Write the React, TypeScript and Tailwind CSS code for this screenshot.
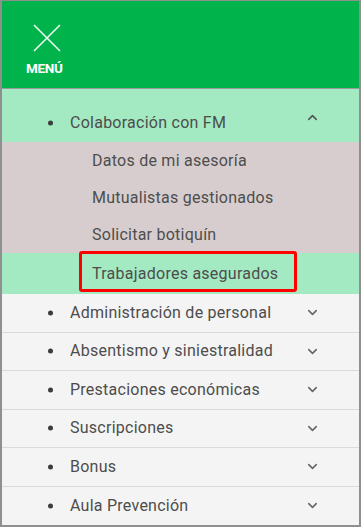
import { ChevronDown, ChevronUp } from "lucide-react";

const subItems = ["Datos de mi asesoría", "Mutualistas gestionados", "Solicitar botiquín"];

const sections = [
  "Administración de personal",
  "Absentismo y siniestralidad",
  "Prestaciones económicas",
  "Suscripciones",
  "Bonus",
  "Aula Prevención",
];

function Bullet() {
  return <span className="absolute left-[46px] top-1/2 -translate-y-1/2 w-[5px] h-[5px] rounded-full bg-[#3c3c3c]" />;
}

export default function App() {
  return (
    <div className="w-[363px] h-[529px] bg-white font-['Roboto',sans-serif] text-[16px] tracking-[0.25px] text-[#4d4d4d]">
      <div className="w-[361px] border-t border-x-2 border-b-2 border-[#8f8f8f]">
        {/* Header */}
        <div className="h-[88px] bg-[#00b44b] border-b border-[#9a9a9a] flex flex-col items-start pl-[24px] pt-[22px]">
          <svg width="30" height="30" viewBox="0 0 30 30" className="ml-[6px]">
            <path d="M2 2 L28 28 M28 2 L2 28" stroke="#eefaf2" strokeWidth="1.6" fill="none" />
          </svg>
          <span className="mt-[9px] text-[13.5px] font-bold text-white leading-none tracking-tight">MENÚ</span>
        </div>

        {/* Active section */}
        <div className="h-[53px] bg-[#a3e9c1] pt-[14px]">
          <div className="relative h-[39px] flex items-center pl-[68px] pr-[39px]">
            <Bullet />
            <span className="flex-1">Colaboración con FM</span>
            <ChevronUp size={15} strokeWidth={2.5} className="text-[#555] -mt-[10px]" />
          </div>
        </div>
        <div className="bg-[#d7cdce]">
          {subItems.map((s) => (
            <div key={s} className="h-[37px] flex items-center pl-[90px]">
              {s}
            </div>
          ))}
        </div>
        <div className="relative h-[41px] bg-[#a3e9c1] flex items-center pl-[90px]">
          <span className="absolute left-[77px] top-[-2px] w-[218px] h-[41px] border-[3.5px] border-[#ff0000] rounded-[3px]" />
          Trabajadores asegurados
        </div>

        {/* Collapsed sections */}
        {sections.map((s, i) => (
          <div
            key={s}
            className={
              "relative h-[38.5px] bg-[#f4f4f4] flex items-center pl-[68px] pr-[39px] " +
              (i < sections.length - 1 ? "border-b border-[#dadada]" : "")
            }
          >
            <Bullet />
            <span className="flex-1">{s}</span>
            <ChevronDown size={15} strokeWidth={2.5} className="text-[#666]" />
          </div>
        ))}
      </div>
    </div>
  );
}
